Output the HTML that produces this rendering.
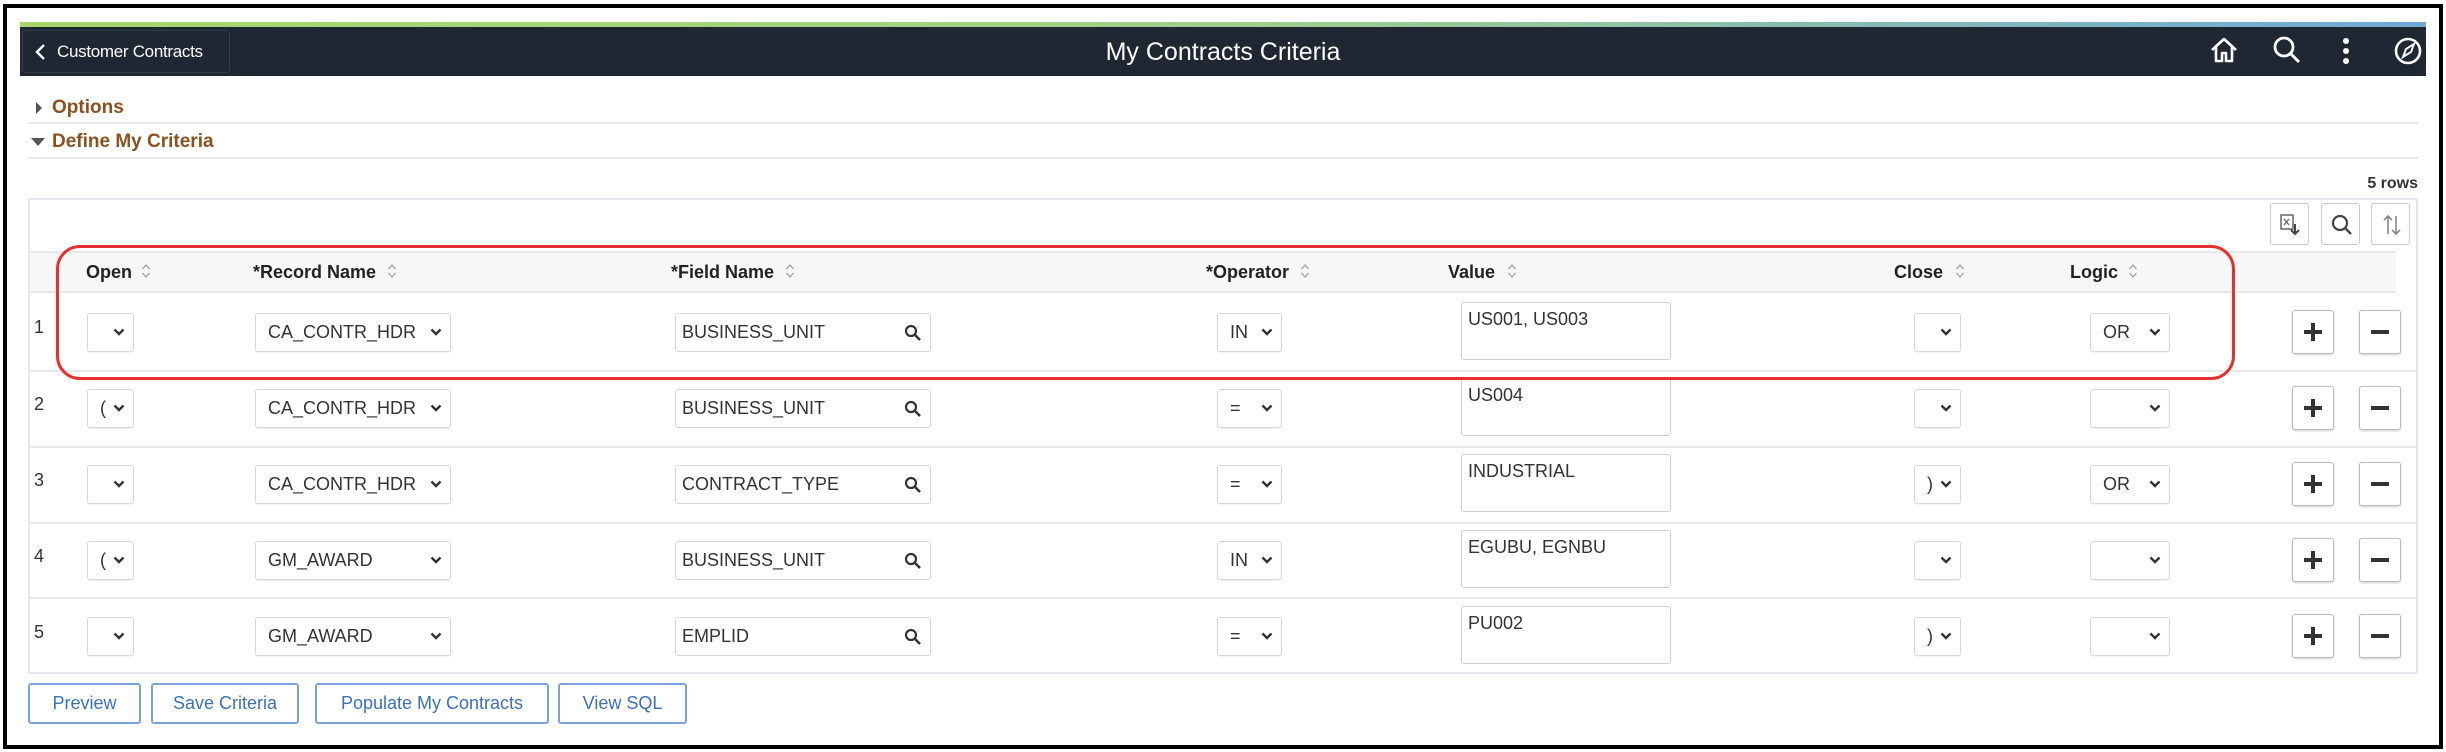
<!DOCTYPE html>
<html><head><meta charset="utf-8"><style>
*{box-sizing:border-box;margin:0;padding:0}
body{width:2446px;height:752px;background:#fff;position:relative;overflow:hidden;font-family:"Liberation Sans",Arial,sans-serif;color:#333}
.a{position:absolute}
.frame{left:3px;top:4px;width:2440px;height:745px;border:4px solid #000}
.grad{left:20px;top:22px;width:2406px;height:5px;background:linear-gradient(90deg,#a9d66b,#9fd08a 50%,#6fa8d8)}
.hdr{left:20px;top:27px;width:2406px;height:49px;background:#1f2733}
.back{left:22px;top:30px;width:208px;height:43px;border:1px solid #323c4a;border-radius:3px;color:#fff;font-size:17px;line-height:41px;padding-left:34px;letter-spacing:-0.3px}
.title{left:0;width:2446px;top:38px;text-align:center;color:#fff;font-size:25px}
.sec{color:#8a5220;font-weight:bold;font-size:19px;left:52px}
.line{height:2px;background:#e6e8ea;left:28px;width:2390px}
.grid{left:28px;top:198px;width:2390px;height:476px;border:2px solid #e3e6ea}
.hrow{left:30px;top:251px;width:2366px;height:42px;background:#f7f7f7;border-top:2px solid #e6e8ea;border-bottom:2px solid #e6e8ea}
.ht{font-weight:bold;font-size:18px;color:#222;top:262px}
.sep{left:30px;width:2386px;height:2px;background:#e6e8ea}
.num{font-size:18px;color:#333;left:34px}
.sel{height:39px;border:1px solid #d4d7db;border-radius:3px;background:#fff;font-size:18px;line-height:37px;padding-left:12px;color:#333;box-shadow:0 1px 1px rgba(0,0,0,.06)}
.sel .ch{position:absolute;right:8px;top:14px;width:12px;height:8px}
.inp{height:39px;border:1px solid #d4d7db;border-radius:3px;background:#fff;font-size:18px;line-height:37px;padding-left:6px}
.ta{height:58px;border:1px solid #ccd0d4;border-radius:3px;background:#fff;font-size:18px;padding:6px 0 0 6px}
.pm{width:42px;height:44px;border:1px solid #b8bcc0;border-radius:3px;background:#fff;box-shadow:0 1px 2px rgba(0,0,0,.2)}
.tb{width:39px;height:42px;border:1px solid #c8ccd0;border-radius:3px;background:#fff;top:203px}
.btn{top:683px;height:41px;border:2px solid #7aa3dc;border-radius:3px;color:#3d70b8;font-size:18px;line-height:37px;text-align:center;background:#fff}
.red{left:56px;top:245px;width:2179px;height:135px;border:3px solid #e53030;border-radius:24px}
</style></head><body>
<div class="a frame"></div>
<div class="a grad"></div>
<div class="a hdr"></div>
<div class="a back"><svg class="a" style="left:12px;top:13px" width="12" height="16" viewBox="0 0 12 16"><path d="M9 1L2 8l7 7" stroke="#fff" stroke-width="2.4" fill="none"/></svg>Customer Contracts</div>
<div class="a title">My Contracts Criteria</div>
<svg class="a" style="left:2209px;top:35px" width="30" height="30" viewBox="0 0 30 30"><path d="M3 15L15 4l12 11M7 12v14h6v-8h4v8h6V12" stroke="#fff" stroke-width="2.6" fill="none" stroke-linejoin="round"/></svg>
<svg class="a" style="left:2272px;top:35px" width="30" height="30" viewBox="0 0 30 30"><circle cx="12" cy="12" r="9" stroke="#fff" stroke-width="2.8" fill="none"/><path d="M18.5 18.5L27 27" stroke="#fff" stroke-width="3"/></svg>
<svg class="a" style="left:2340px;top:36px" width="12" height="30" viewBox="0 0 12 30"><circle cx="6" cy="5" r="3" fill="#fff"/><circle cx="6" cy="15" r="3" fill="#fff"/><circle cx="6" cy="25" r="3" fill="#fff"/></svg>
<svg class="a" style="left:2393px;top:36px" width="30" height="30" viewBox="0 0 30 30"><circle cx="15" cy="15" r="12" stroke="#fff" stroke-width="2.6" fill="none"/><path d="M10 21l3-8 8-5-3 8z" stroke="#fff" stroke-width="2" fill="none"/></svg>

<svg class="a" style="left:35px;top:102px" width="8" height="12" viewBox="0 0 8 12"><path d="M1 0l6 6-6 6z" fill="#555"/></svg>
<div class="a sec" style="top:97px">Options</div>
<div class="a line" style="top:122px"></div>
<svg class="a" style="left:31px;top:138px" width="14" height="8" viewBox="0 0 14 8"><path d="M0 0h14L7 8z" fill="#555"/></svg>
<div class="a sec" style="top:131px">Define My Criteria</div>
<div class="a line" style="top:157px"></div>
<div class="a" style="right:28px;top:175px;font-weight:bold;font-size:16px;color:#333">5 rows</div>

<div class="a grid"></div>
<div class="a tb" style="left:2270px"><svg class="a" style="left:9px;top:10px" width="20" height="22" viewBox="0 0 20 22"><rect x="1" y="1" width="12" height="14" fill="none" stroke="#666" stroke-width="1.5"/><path d="M4 5l5 6M9 5l-5 6" stroke="#666" stroke-width="1.3"/><path d="M15 10v10M11 16l4 4 4-4" stroke="#444" stroke-width="2" fill="none"/></svg></div>
<div class="a tb" style="left:2321px"><svg class="a" style="left:9px;top:10px" width="22" height="22" viewBox="0 0 22 22"><circle cx="9" cy="9" r="7" stroke="#444" stroke-width="2.2" fill="none"/><path d="M14 14l6 6" stroke="#444" stroke-width="2.4"/></svg></div>
<div class="a tb" style="left:2371px"><svg class="a" style="left:9px;top:10px" width="22" height="22" viewBox="0 0 22 22"><path d="M7 20V2M3 6l4-4 4 4M15 2v18M11 16l4 4 4-4" stroke="#888" stroke-width="1.6" fill="none"/></svg></div>

<div class="a hrow"></div>
<div class="a ht" style="left:86px">Open</div>
<div class="a ht" style="left:253px">*Record Name</div>
<div class="a ht" style="left:671px">*Field Name</div>
<div class="a ht" style="left:1206px">*Operator</div>
<div class="a ht" style="left:1448px">Value</div>
<div class="a ht" style="left:1894px">Close</div>
<div class="a ht" style="left:2070px">Logic</div>
<svg width="0" height="0" style="position:absolute"><defs><symbol id="s" viewBox="0 0 10 16"><path d="M1.5 6L5 2l3.5 4M1.5 10L5 14l3.5-4" stroke="#999" stroke-width="1.2" fill="none"/></symbol><symbol id="c" viewBox="0 0 12 8"><path d="M1.5 1.5L6 6l4.5-4.5" stroke="#333" stroke-width="2.4" fill="none"/></symbol></defs></svg>
<svg class="a" style="left:141px;top:263px" width="10" height="16"><use href="#s"/></svg>
<svg class="a" style="left:387px;top:263px" width="10" height="16"><use href="#s"/></svg>
<svg class="a" style="left:785px;top:263px" width="10" height="16"><use href="#s"/></svg>
<svg class="a" style="left:1300px;top:263px" width="10" height="16"><use href="#s"/></svg>
<svg class="a" style="left:1507px;top:263px" width="10" height="16"><use href="#s"/></svg>
<svg class="a" style="left:1955px;top:263px" width="10" height="16"><use href="#s"/></svg>
<svg class="a" style="left:2128px;top:263px" width="10" height="16"><use href="#s"/></svg>

<div class="a sep" style="top:370px"></div>
<div class="a sep" style="top:446px"></div>
<div class="a sep" style="top:522px"></div>
<div class="a sep" style="top:597px"></div>

<div class="a num" style="top:317px">1</div>
<div class="a sel" style="left:87px;top:313px;width:47px"><svg class="ch" viewBox="0 0 12 8"><use href="#c"/></svg></div>
<div class="a sel" style="left:255px;top:313px;width:196px">CA_CONTR_HDR<svg class="ch" viewBox="0 0 12 8"><use href="#c"/></svg></div>
<div class="a inp" style="left:675px;top:313px;width:256px">BUSINESS_UNIT<svg class="a" style="right:8px;top:10px" width="18" height="18" viewBox="0 0 18 18"><circle cx="7" cy="7" r="5" stroke="#333" stroke-width="2.2" fill="none"/><path d="M11 11l5 5" stroke="#333" stroke-width="2.6"/></svg></div>
<div class="a sel" style="left:1217px;top:313px;width:65px">IN<svg class="ch" viewBox="0 0 12 8"><use href="#c"/></svg></div>
<div class="a ta" style="left:1461px;top:302px;width:210px">US001, US003</div>
<div class="a sel" style="left:1914px;top:313px;width:47px"><svg class="ch" viewBox="0 0 12 8"><use href="#c"/></svg></div>
<div class="a sel" style="left:2090px;top:313px;width:80px">OR<svg class="ch" viewBox="0 0 12 8"><use href="#c"/></svg></div>
<div class="a pm" style="left:2292px;top:310px"><svg class="a" style="left:10px;top:11px" width="20" height="20"><path d="M10 1v18M1 10h18" stroke="#333" stroke-width="4"/></svg></div>
<div class="a pm" style="left:2359px;top:310px"><svg class="a" style="left:10px;top:11px" width="20" height="20"><path d="M1 10h18" stroke="#333" stroke-width="4"/></svg></div>

<div class="a num" style="top:394px">2</div>
<div class="a sel" style="left:87px;top:389px;width:47px">(<svg class="ch" viewBox="0 0 12 8"><use href="#c"/></svg></div>
<div class="a sel" style="left:255px;top:389px;width:196px">CA_CONTR_HDR<svg class="ch" viewBox="0 0 12 8"><use href="#c"/></svg></div>
<div class="a inp" style="left:675px;top:389px;width:256px">BUSINESS_UNIT<svg class="a" style="right:8px;top:10px" width="18" height="18" viewBox="0 0 18 18"><circle cx="7" cy="7" r="5" stroke="#333" stroke-width="2.2" fill="none"/><path d="M11 11l5 5" stroke="#333" stroke-width="2.6"/></svg></div>
<div class="a sel" style="left:1217px;top:389px;width:65px">=<svg class="ch" viewBox="0 0 12 8"><use href="#c"/></svg></div>
<div class="a ta" style="left:1461px;top:378px;width:210px">US004</div>
<div class="a sel" style="left:1914px;top:389px;width:47px"><svg class="ch" viewBox="0 0 12 8"><use href="#c"/></svg></div>
<div class="a sel" style="left:2090px;top:389px;width:80px"><svg class="ch" viewBox="0 0 12 8"><use href="#c"/></svg></div>
<div class="a pm" style="left:2292px;top:386px"><svg class="a" style="left:10px;top:11px" width="20" height="20"><path d="M10 1v18M1 10h18" stroke="#333" stroke-width="4"/></svg></div>
<div class="a pm" style="left:2359px;top:386px"><svg class="a" style="left:10px;top:11px" width="20" height="20"><path d="M1 10h18" stroke="#333" stroke-width="4"/></svg></div>

<div class="a num" style="top:470px">3</div>
<div class="a sel" style="left:87px;top:465px;width:47px"><svg class="ch" viewBox="0 0 12 8"><use href="#c"/></svg></div>
<div class="a sel" style="left:255px;top:465px;width:196px">CA_CONTR_HDR<svg class="ch" viewBox="0 0 12 8"><use href="#c"/></svg></div>
<div class="a inp" style="left:675px;top:465px;width:256px">CONTRACT_TYPE<svg class="a" style="right:8px;top:10px" width="18" height="18" viewBox="0 0 18 18"><circle cx="7" cy="7" r="5" stroke="#333" stroke-width="2.2" fill="none"/><path d="M11 11l5 5" stroke="#333" stroke-width="2.6"/></svg></div>
<div class="a sel" style="left:1217px;top:465px;width:65px">=<svg class="ch" viewBox="0 0 12 8"><use href="#c"/></svg></div>
<div class="a ta" style="left:1461px;top:454px;width:210px">INDUSTRIAL</div>
<div class="a sel" style="left:1914px;top:465px;width:47px">)<svg class="ch" viewBox="0 0 12 8"><use href="#c"/></svg></div>
<div class="a sel" style="left:2090px;top:465px;width:80px">OR<svg class="ch" viewBox="0 0 12 8"><use href="#c"/></svg></div>
<div class="a pm" style="left:2292px;top:462px"><svg class="a" style="left:10px;top:11px" width="20" height="20"><path d="M10 1v18M1 10h18" stroke="#333" stroke-width="4"/></svg></div>
<div class="a pm" style="left:2359px;top:462px"><svg class="a" style="left:10px;top:11px" width="20" height="20"><path d="M1 10h18" stroke="#333" stroke-width="4"/></svg></div>

<div class="a num" style="top:546px">4</div>
<div class="a sel" style="left:87px;top:541px;width:47px">(<svg class="ch" viewBox="0 0 12 8"><use href="#c"/></svg></div>
<div class="a sel" style="left:255px;top:541px;width:196px">GM_AWARD<svg class="ch" viewBox="0 0 12 8"><use href="#c"/></svg></div>
<div class="a inp" style="left:675px;top:541px;width:256px">BUSINESS_UNIT<svg class="a" style="right:8px;top:10px" width="18" height="18" viewBox="0 0 18 18"><circle cx="7" cy="7" r="5" stroke="#333" stroke-width="2.2" fill="none"/><path d="M11 11l5 5" stroke="#333" stroke-width="2.6"/></svg></div>
<div class="a sel" style="left:1217px;top:541px;width:65px">IN<svg class="ch" viewBox="0 0 12 8"><use href="#c"/></svg></div>
<div class="a ta" style="left:1461px;top:530px;width:210px">EGUBU, EGNBU</div>
<div class="a sel" style="left:1914px;top:541px;width:47px"><svg class="ch" viewBox="0 0 12 8"><use href="#c"/></svg></div>
<div class="a sel" style="left:2090px;top:541px;width:80px"><svg class="ch" viewBox="0 0 12 8"><use href="#c"/></svg></div>
<div class="a pm" style="left:2292px;top:538px"><svg class="a" style="left:10px;top:11px" width="20" height="20"><path d="M10 1v18M1 10h18" stroke="#333" stroke-width="4"/></svg></div>
<div class="a pm" style="left:2359px;top:538px"><svg class="a" style="left:10px;top:11px" width="20" height="20"><path d="M1 10h18" stroke="#333" stroke-width="4"/></svg></div>

<div class="a num" style="top:622px">5</div>
<div class="a sel" style="left:87px;top:617px;width:47px"><svg class="ch" viewBox="0 0 12 8"><use href="#c"/></svg></div>
<div class="a sel" style="left:255px;top:617px;width:196px">GM_AWARD<svg class="ch" viewBox="0 0 12 8"><use href="#c"/></svg></div>
<div class="a inp" style="left:675px;top:617px;width:256px">EMPLID<svg class="a" style="right:8px;top:10px" width="18" height="18" viewBox="0 0 18 18"><circle cx="7" cy="7" r="5" stroke="#333" stroke-width="2.2" fill="none"/><path d="M11 11l5 5" stroke="#333" stroke-width="2.6"/></svg></div>
<div class="a sel" style="left:1217px;top:617px;width:65px">=<svg class="ch" viewBox="0 0 12 8"><use href="#c"/></svg></div>
<div class="a ta" style="left:1461px;top:606px;width:210px">PU002</div>
<div class="a sel" style="left:1914px;top:617px;width:47px">)<svg class="ch" viewBox="0 0 12 8"><use href="#c"/></svg></div>
<div class="a sel" style="left:2090px;top:617px;width:80px"><svg class="ch" viewBox="0 0 12 8"><use href="#c"/></svg></div>
<div class="a pm" style="left:2292px;top:614px"><svg class="a" style="left:10px;top:11px" width="20" height="20"><path d="M10 1v18M1 10h18" stroke="#333" stroke-width="4"/></svg></div>
<div class="a pm" style="left:2359px;top:614px"><svg class="a" style="left:10px;top:11px" width="20" height="20"><path d="M1 10h18" stroke="#333" stroke-width="4"/></svg></div>

<div class="a red"></div>

<div class="a btn" style="left:28px;width:113px">Preview</div>
<div class="a btn" style="left:151px;width:148px">Save Criteria</div>
<div class="a btn" style="left:315px;width:234px">Populate My Contracts</div>
<div class="a btn" style="left:558px;width:129px">View SQL</div>
</body></html>
